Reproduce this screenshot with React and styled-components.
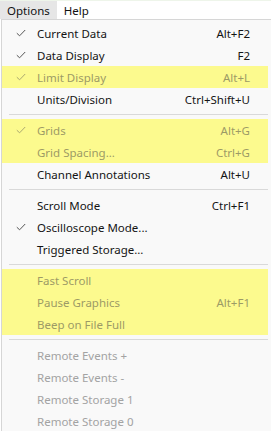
import styled, { createGlobalStyle } from "styled-components";

const GlobalStyle = createGlobalStyle`
  html, body {
    margin: 0;
    background: #ffffff;
  }
  body {
    font-family: "Noto Sans", "Open Sans", sans-serif;
    font-size: 11.5px;
    color: #1a1a1a;
  }
`;

const menu = [
  [
    { label: "Current Data", key: "Alt+F2", checked: true },
    { label: "Data Display", key: "F2", checked: true },
    { label: "Limit Display", key: "Alt+L", checked: true, disabled: true, marked: true },
    { label: "Units/Division", key: "Ctrl+Shift+U" },
  ],
  [
    { label: "Grids", key: "Alt+G", checked: true, disabled: true, marked: true },
    { label: "Grid Spacing...", key: "Ctrl+G", disabled: true, marked: true },
    { label: "Channel Annotations", key: "Alt+U" },
  ],
  [
    { label: "Scroll Mode", key: "Ctrl+F1" },
    { label: "Oscilloscope Mode...", checked: true },
    { label: "Triggered Storage..." },
  ],
  [
    { label: "Fast Scroll", disabled: true, marked: true },
    { label: "Pause Graphics", key: "Alt+F1", disabled: true, marked: true },
    { label: "Beep on File Full", disabled: true, marked: true },
  ],
  [
    { label: "Remote Events +", disabled: true },
    { label: "Remote Events -", disabled: true },
    { label: "Remote Storage 1", disabled: true },
    { label: "Remote Storage 0", disabled: true },
  ],
];

const MenuBar = styled.div`
  display: flex;
  height: 19px;
  border-top: 1px solid #eef5ea;
  box-sizing: border-box;
  background: #ffffff;
`;

const BarItem = styled.div`
  display: flex;
  align-items: center;
  padding: 0 ${(p) => (p.$active ? "7px" : "7px")} 0 7px;
  background: ${(p) => (p.$active ? "#e6e6e6" : "transparent")};
  color: #111;
`;

const Panel = styled.div`
  margin-left: 1px;
  width: 270px;
  box-sizing: border-box;
  border: 1px solid #d6d6d6;
  border-right: none;
  background: #f9f9f9;
  padding: 2px 3px 0 0;
`;

const Row = styled.div`
  display: grid;
  grid-template-columns: 35px 1fr auto;
  align-items: center;
  height: 22px;
  padding-right: 18px;
  background: ${(p) => (p.$marked ? "#fcfa8e" : "transparent")};
  color: ${(p) =>
    p.$disabled ? (p.$marked ? "#9c9a66" : "#a3a3a3") : "#141414"};
`;

const Check = styled.span`
  display: flex;
  justify-content: center;
  padding-left: 2px;
  color: ${(p) => (p.$disabled ? "#aaa870" : "#555555")};
`;

const Shortcut = styled.span`
  text-align: right;
`;

const Separator = styled.div`
  height: 1px;
  margin: 4px 0 4px 7px;
  background: #d9d9d9;
`;

const Tick = ({ disabled }) => (
  <Check $disabled={disabled}>
    <svg width="10" height="8" viewBox="0 0 10 8">
      <path d="M0.8 4.2 L3.6 6.8 L9.2 1" fill="none" stroke="currentColor" strokeWidth="1" />
    </svg>
  </Check>
);

export default function App() {
  return (
    <>
      <GlobalStyle />
      <MenuBar>
        <BarItem $active>Options</BarItem>
        <BarItem>Help</BarItem>
      </MenuBar>
      <Panel>
        {menu.map((group, gi) => (
          <div key={gi}>
            {gi > 0 && <Separator />}
            {group.map((item) => (
              <Row key={item.label} $disabled={item.disabled} $marked={item.marked}>
                {item.checked ? <Tick disabled={item.disabled} /> : <span />}
                <span>{item.label}</span>
                <Shortcut>{item.key}</Shortcut>
              </Row>
            ))}
          </div>
        ))}
      </Panel>
    </>
  );
}
